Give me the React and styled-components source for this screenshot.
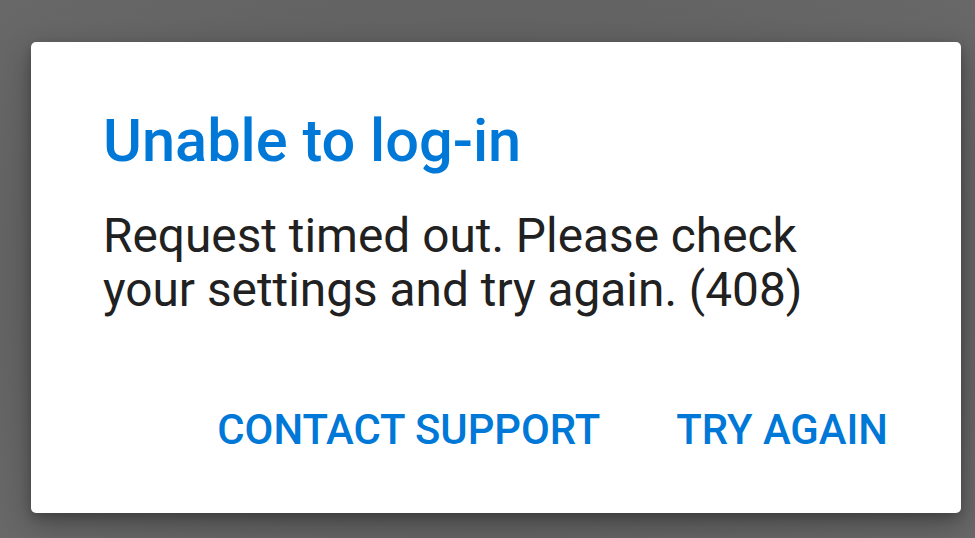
import React from "react";
import styled, { createGlobalStyle } from "styled-components";

const GlobalStyle = createGlobalStyle`
  html, body {
    margin: 0;
    padding: 0;
    background: #646464;
  }
  body {
    font-family: Roboto, "Liberation Sans", sans-serif;
  }
`;

const Overlay = styled.div`
  width: 975px;
  height: 538px;
  box-sizing: border-box;
  padding: 42px 0 0 31px;
  background: radial-gradient(ellipse at 50% 50%, #5a5a5a 0%, #636363 70%, #686868 100%);
  overflow: hidden;
`;

const Dialog = styled.div`
  width: 930px;
  height: 471px;
  box-sizing: border-box;
  padding: 63px 73px 0 72px;
  background: #ffffff;
  border-radius: 5px;
  box-shadow: 0 10px 28px rgba(0, 0, 0, 0.3), 0 4px 10px rgba(0, 0, 0, 0.18);
  display: flex;
  flex-direction: column;
`;

const Title = styled.h2`
  margin: 0;
  font-size: 59.5px;
  font-weight: 500;
  line-height: 72px;
  color: #0078d7;
`;

const Message = styled.p`
  margin: 32px 0 0 0;
  font-size: 47.8px;
  font-weight: 400;
  line-height: 54px;
  color: #212121;
`;

const Actions = styled.div`
  display: flex;
  justify-content: flex-end;
  gap: 76px;
  margin-top: 89px;
`;

const ActionButton = styled.button`
  border: none;
  background: none;
  padding: 0;
  font-family: inherit;
  font-size: 41.8px;
  font-weight: 500;
  line-height: 48px;
  text-transform: uppercase;
  color: #0078d7;
  cursor: pointer;
`;

const App = () => {
  return (
    <>
      <GlobalStyle />
      <Overlay>
        <Dialog>
          <Title>Unable to log-in</Title>
          <Message>
            Request timed out. Please check
            <br />
            your settings and try again. (408)
          </Message>
          <Actions>
            <ActionButton>Contact support</ActionButton>
            <ActionButton>Try again</ActionButton>
          </Actions>
        </Dialog>
      </Overlay>
    </>
  );
};

export default App;
